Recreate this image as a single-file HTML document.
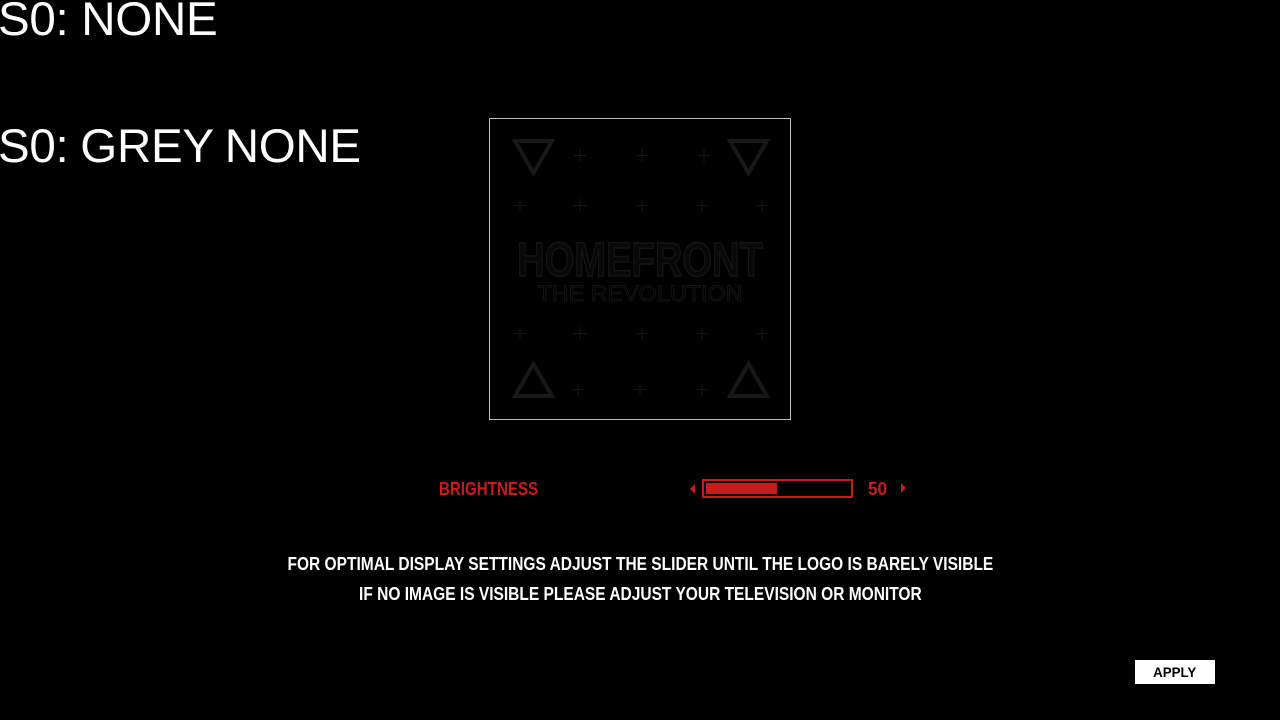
<!DOCTYPE html>
<html><head><style>
html,body{margin:0;padding:0;background:#000;width:1280px;height:720px;overflow:hidden;position:relative;font-family:"Liberation Sans",sans-serif}
.big{position:absolute;left:-2px;color:#fff;font-size:47.5px;line-height:1;white-space:nowrap;letter-spacing:-0.3px}
.c{position:absolute;white-space:nowrap;font-weight:bold;transform-origin:center center}
</style></head><body>
<div class="big" style="top:-4px">S0: NONE</div>
<div class="big" style="top:123px;word-spacing:-1px">S0: GREY NONE</div>

<div style="position:absolute;left:489px;top:118px;width:300px;height:300px;border:1px solid #bbb;background:#000">
<svg width="300" height="300" viewBox="0 0 300 300" style="position:absolute;left:0;top:0">
<g stroke="#161616" stroke-width="1" fill="none">
<path d="M90 30v13M83.5 36.5h13M152 30v13M145.5 36.5h13M214 30v13M207.5 36.5h13"/>
<path d="M30 80v13M23.5 86.5h13M90 80v13M83.5 86.5h13M152 80v13M145.5 86.5h13M212 80v13M205.5 86.5h13M272 80v13M265.5 86.5h13"/>
<path d="M30 208v13M23.5 214.5h13M90 208v13M83.5 214.5h13M152 208v13M145.5 214.5h13M212 208v13M205.5 214.5h13M272 208v13M265.5 214.5h13"/>
<path d="M88 264v13M81.5 270.5h13M150 264v13M143.5 270.5h13M212 264v13M205.5 270.5h13"/>
</g>
<g stroke="#181818" stroke-width="4" fill="none">
<path d="M25 22h37l-18.5 32z"/><path d="M240 22h37l-18.5 32z"/>
<path d="M25 277h37l-18.5-32z"/><path d="M240 277h37l-18.5-32z"/>
</g>
<text x="150" y="157" text-anchor="middle" font-family="Liberation Sans" font-weight="bold" font-size="48" fill="#080808" stroke="#151515" stroke-width="1.5" textLength="246" lengthAdjust="spacingAndGlyphs">HOMEFRONT</text>
<text x="150" y="182" text-anchor="middle" font-family="Liberation Sans" font-size="22" fill="none" stroke="#141414" stroke-width="1" textLength="205" lengthAdjust="spacingAndGlyphs">THE REVOLUTION</text>
</svg>
</div>

<div class="c" style="left:439px;top:479px;color:#c81c1c;font-size:18px;transform:scaleX(0.84);transform-origin:left center">BRIGHTNESS</div>
<svg style="position:absolute;left:688px;top:483px" width="8" height="12"><path d="M7 1v10L2 6z" fill="#c81c1c"/></svg>
<div style="position:absolute;left:702px;top:479px;width:147px;height:15px;border:2px solid #c81c1c"></div>
<div style="position:absolute;left:706px;top:483px;width:71px;height:11px;background:#c81c1c"></div>
<div class="c" style="left:868px;top:479px;color:#c81c1c;font-size:18px;transform:scaleX(0.95);transform-origin:left center">50</div>
<svg style="position:absolute;left:900px;top:482px" width="8" height="12"><path d="M1 1v10L6 6z" fill="#c81c1c"/></svg>

<div style="position:absolute;left:0;width:1280px;top:549px;text-align:center;color:#fff;font-weight:bold;font-size:18px;line-height:30px">
<div style="display:inline-block;transform:scaleX(0.862);white-space:nowrap">FOR OPTIMAL DISPLAY SETTINGS ADJUST THE SLIDER UNTIL THE LOGO IS BARELY VISIBLE</div><br>
<div style="display:inline-block;transform:scaleX(0.862);white-space:nowrap">IF NO IMAGE IS VISIBLE PLEASE ADJUST YOUR TELEVISION OR MONITOR</div>
</div>

<div style="position:absolute;left:1135px;top:660px;width:80px;height:24px;background:#fff;color:#000;text-align:center;font-weight:bold;font-size:14px;line-height:24px"><span style="display:inline-block;transform:scaleX(0.95)">APPLY</span></div>
</body></html>
